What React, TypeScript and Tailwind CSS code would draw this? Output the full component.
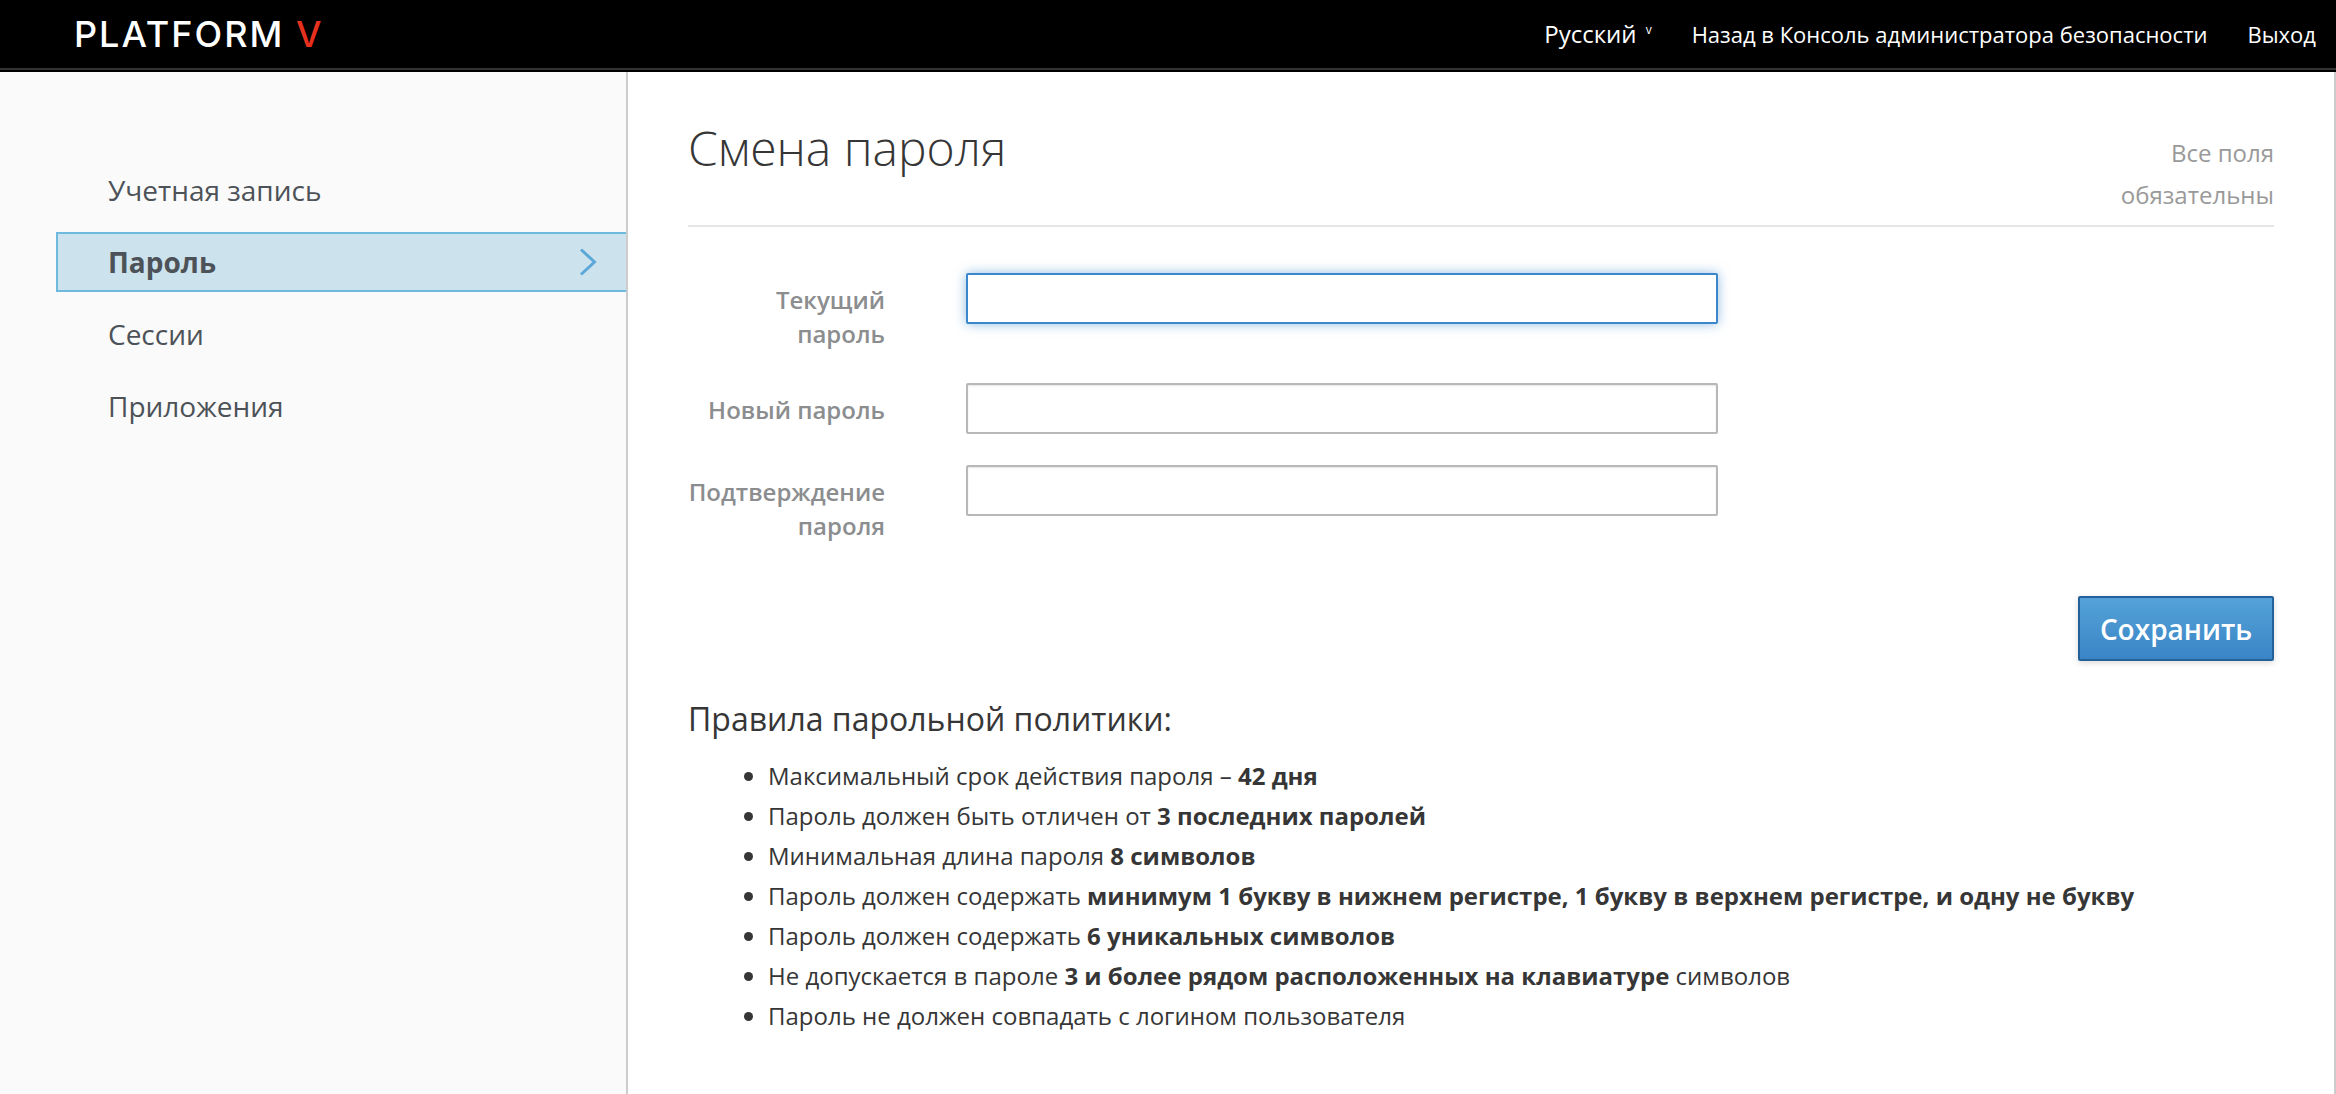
const rules = [
  { text: 'Максимальный срок действия пароля – ', bold: '42 дня' },
  { text: 'Пароль должен быть отличен от ', bold: '3 последних паролей' },
  { text: 'Минимальная длина пароля ', bold: '8 символов' },
  { text: 'Пароль должен содержать ', bold: 'минимум 1 букву в нижнем регистре, 1 букву в верхнем регистре, и одну не букву' },
  { text: 'Пароль должен содержать ', bold: '6 уникальных символов' },
  { text: 'Не допускается в пароле ', bold: '3 и более рядом расположенных на клавиатуре', tail: ' символов' },
  { text: 'Пароль не должен совпадать с логином пользователя' },
];

const Header = () => (
  <header className="h-[72px] bg-black flex flex-col pb-[2px]">
    <div className="flex-1 flex items-center justify-between pl-[74px] pr-[20px]">
      <div className="font-['Inter',sans-serif] text-[36px] font-medium leading-none text-white tracking-[2px]">
        PLATFORM <span className="text-[#e8301f]">V</span>
      </div>
      <nav className="flex items-center text-[22px] text-white font-['Open_Sans',sans-serif]">
        <span className="text-[24px]">Русский</span>
        <span className="ml-[9px] mb-[8px] text-[12px]">v</span>
        <a className="ml-[40px]">Назад в Консоль администратора безопасности</a>
        <a className="ml-[40px]">Выход</a>
      </nav>
    </div>
    <div className="h-[2px] bg-[#333333]" />
  </header>
);

const Sidebar = () => (
  <aside className="w-[628px] shrink-0 bg-[#fafafa] border-r-2 border-[#cccccc] pl-[56px] pt-[88px]">
    <ul className="flex flex-col gap-[12px] text-[28px] text-[#4d5258]">
      <li className="h-[60px] pl-[52px] flex items-center">Учетная запись</li>
      <li className="h-[60px] pl-[50px] flex items-center justify-between font-bold bg-[#cce3ee] border-2 border-r-0 border-[#6db9e0]">
        Пароль
        <svg width="18" height="28" viewBox="0 0 18 28" fill="none" className="mr-[29px]">
          <path d="M2 1.5 L15.5 14 L2 26.5" stroke="#5ba8d8" strokeWidth="3" />
        </svg>
      </li>
      <li className="h-[60px] pl-[52px] flex items-center">Сессии</li>
      <li className="h-[60px] pl-[52px] flex items-center">Приложения</li>
    </ul>
  </aside>
);

const Field = ({ label, focused }: { label: React.ReactNode; focused?: boolean }) => (
  <div className="flex items-start">
    <label className="w-[197px] pt-[10px] pb-[1px] text-right text-[24px] leading-[34px] font-semibold text-[#8b8d8f]">{label}</label>
    <input
      type="password"
      className={
        focused
          ? 'ml-[81px] w-[752px] h-[51px] bg-white border-2 border-[#3a87cc] rounded-[2px] outline-none shadow-[0_0_12px_rgba(58,135,204,0.55)]'
          : 'ml-[81px] w-[752px] h-[51px] bg-white border-2 border-[#b8b8b8] rounded-[2px] outline-none shadow-[inset_0_1px_2px_rgba(0,0,0,0.1)]'
      }
    />
  </div>
);

const App = () => (
  <div className="min-h-[1094px] flex flex-col bg-white font-['Open_Sans',sans-serif]">
    <Header />
    <div className="flex flex-1">
      <Sidebar />
      <main className="flex-1 pl-[60px] pr-[60px] pt-[47px] border-r-2 border-[#cccccc]">
        <div className="h-[108px] flex items-start justify-between border-b-2 border-[#e6e6e6]">
          <h1 className="text-[48px] leading-[58px] font-light text-[#363636]">Смена пароля</h1>
          <p className="mt-[13px] text-right text-[24px] leading-[42px] text-[#999999]">
            Все поля
            <br />
            обязательны
          </p>
        </div>
        <form className="mt-[46px] flex flex-col gap-[31px]">
          <Field label={<>Текущий<br />пароль</>} focused />
          <Field label="Новый пароль" />
          <Field label={<>Подтверждение<br />пароля</>} />
        </form>
        <div className="mt-[52px] flex justify-end">
          <button className="w-[196px] h-[65px] rounded-[2px] border-2 border-[#24609a] bg-gradient-to-b from-[#54a2d8] to-[#3a85c6] text-white text-[28px] font-semibold shadow-[0_2px_6px_rgba(0,0,0,0.15)]">
            Сохранить
          </button>
        </div>
        <h2 className="mt-[37px] text-[32px] leading-[42px] text-[#363636]">Правила парольной политики:</h2>
        <ul className="mt-[16px] pl-[80px] list-disc text-[24px] leading-[40px] text-[#363636]">
          {rules.map((r, i) => (
            <li key={i}>
              {r.text}
              {r.bold && <b className="font-bold">{r.bold}</b>}
              {r.tail}
            </li>
          ))}
        </ul>
      </main>
    </div>
  </div>
);

export default App;
